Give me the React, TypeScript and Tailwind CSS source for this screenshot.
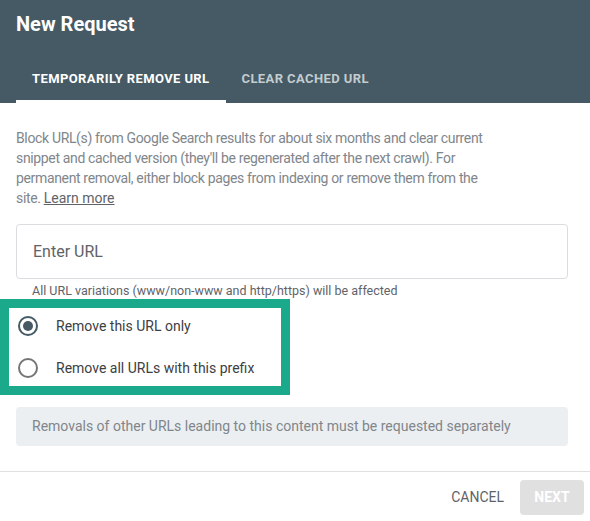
import { useState } from "react";

type Mode = "single" | "prefix";

const OPTIONS: { id: Mode; label: string }[] = [
  { id: "single", label: "Remove this URL only" },
  { id: "prefix", label: "Remove all URLs with this prefix" },
];

function Radio({ checked }: { checked: boolean }) {
  return (
    <span
      className={`flex h-5 w-5 shrink-0 items-center justify-center rounded-full border-2 ${
        checked ? "border-[#455a64]" : "border-[#757575]"
      }`}
    >
      {checked && <span className="h-2.5 w-2.5 rounded-full bg-[#455a64]" />}
    </span>
  );
}

export default function App() {
  const [tab, setTab] = useState(0);
  const [mode, setMode] = useState<Mode>("single");

  return (
    <div className="min-h-[521px] w-[590px] bg-white font-['Roboto',sans-serif]">
      {/* Header */}
      <div className="bg-[#455a64]">
        <div className="h-[55px] px-4 pt-[11px]">
          <h1 className="text-[20px] font-bold leading-[26px] text-white">New Request</h1>
        </div>
        <div className="flex h-12 px-4">
          {["Temporarily remove URL", "Clear cached URL"].map((t, i) => (
            <button
              key={t}
              onClick={() => setTab(i)}
              className={`flex items-center border-b-[3px] px-4 pt-[3px] text-[13px] font-bold uppercase tracking-[0.4px] ${
                tab === i ? "border-white text-white" : "border-transparent text-[#c3cccf]"
              }`}
            >
              {t}
            </button>
          ))}
        </div>
      </div>

      {/* Body */}
      <div className="pl-4 pr-[22px] pt-[25px]">
        <p className="max-w-[478px] text-[14px] leading-5 tracking-[-0.35px] text-[#80868b]">
          Block URL(s) from Google Search results for about six months and clear current snippet and
          cached version (they'll be regenerated after the next crawl). For permanent removal, either
          block pages from indexing or remove them from the site.{" "}
          <span className="text-[#5f6368] underline tracking-normal">Learn more</span>
        </p>

        <div className="mt-4 flex h-[55px] items-center rounded border border-[#dadce0] px-4">
          <input
            placeholder="Enter URL"
            className="w-full bg-transparent text-[16px] text-[#3c4043] outline-none placeholder:text-[#5f6368]"
          />
        </div>
        <div className="mt-1 px-4 text-[12.5px] leading-4 text-[#5f6368]">
          All URL variations (www/non-www and http/https) will be affected
        </div>
      </div>

      <div className="flex w-[290px] flex-col gap-1.5 border-[9px] border-[#1aa98a] pl-[9px]">
        {OPTIONS.map((o) => (
          <button
            key={o.id}
            onClick={() => setMode(o.id)}
            className="flex h-9 items-center gap-[18px] text-left text-[14px] text-[#3c4043]"
          >
            <Radio checked={mode === o.id} />
            {o.label}
          </button>
        ))}
      </div>

      <div className="pl-4 pr-[22px] pt-3">
        <div className="flex h-[39px] items-center rounded bg-[#eceff1] px-4 text-[14px] text-[#80868b]">
          Removals of other URLs leading to this content must be requested separately
        </div>
      </div>

      {/* Footer */}
      <div className="mt-[25px] flex justify-end border-t border-[#e0e0e0] pr-1.5 pt-2">
        <button className="h-[35px] px-4 text-[14px] uppercase text-[#5f6368]">Cancel</button>
        <button
          disabled
          className="h-[35px] w-16 rounded bg-[#e0e0e0] text-[14px] font-bold uppercase text-white"
        >
          Next
        </button>
      </div>
    </div>
  );
}
